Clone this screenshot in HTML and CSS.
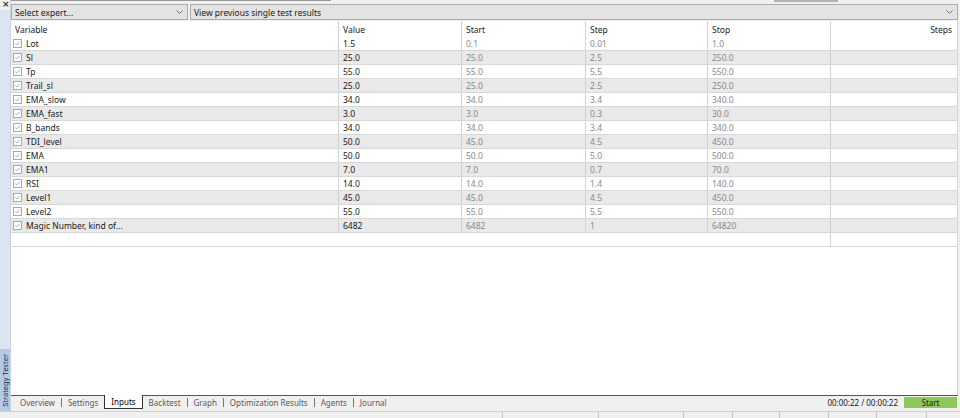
FILE: index.html
```html
<!DOCTYPE html>
<html>
<head>
<meta charset="utf-8">
<link rel="stylesheet" href="styles.css">
</head>
<body>
<div class="app">
  <div class="body">
    <aside class="side">
      <span class="close">×</span>
      <div class="side-fill"></div>
      <div class="side-label"><span>Strategy Tester</span></div>
    </aside>
    <div class="main">
      <div class="topstrip"><span class="thumb-left"></span><span class="thumb"></span></div>
      <div class="selects">
        <div class="select s1"><span>Select expert...</span><svg class="chev" width="7" height="4" viewBox="0 0 7 4"><polyline points="0.5,0.5 3.5,3.5 6.5,0.5" fill="none" stroke="#707070" stroke-width="1"/></svg></div>
        <div class="select s2"><span>View previous single test results</span><svg class="chev" width="7" height="4" viewBox="0 0 7 4"><polyline points="0.5,0.5 3.5,3.5 6.5,0.5" fill="none" stroke="#707070" stroke-width="1"/></svg></div>
      </div>
      <div class="grid">
        <div class="row head">
          <div class="c">Variable</div><div class="c">Value</div><div class="c">Start</div><div class="c">Step</div><div class="c">Stop</div><div class="c r">Steps</div>
        </div>
        <div class="row"><div class="c"><svg class="cb" width="9" height="9" viewBox="0 0 9 9"><rect x="0.5" y="0.5" width="8" height="8" fill="#fff" stroke="#9aaec2"/><polyline points="2.3,4.5 3.7,6 6.7,2.8" fill="none" stroke="#9fb0c2"/></svg>Lot</div><div class="c v">1.5</div><div class="c g">0.1</div><div class="c g">0.01</div><div class="c g">1.0</div><div class="c"></div></div>
        <div class="row alt"><div class="c"><svg class="cb" width="9" height="9" viewBox="0 0 9 9"><rect x="0.5" y="0.5" width="8" height="8" fill="#fff" stroke="#9aaec2"/><polyline points="2.3,4.5 3.7,6 6.7,2.8" fill="none" stroke="#9fb0c2"/></svg>Sl</div><div class="c v">25.0</div><div class="c g">25.0</div><div class="c g">2.5</div><div class="c g">250.0</div><div class="c"></div></div>
        <div class="row"><div class="c"><svg class="cb" width="9" height="9" viewBox="0 0 9 9"><rect x="0.5" y="0.5" width="8" height="8" fill="#fff" stroke="#9aaec2"/><polyline points="2.3,4.5 3.7,6 6.7,2.8" fill="none" stroke="#9fb0c2"/></svg>Tp</div><div class="c v">55.0</div><div class="c g">55.0</div><div class="c g">5.5</div><div class="c g">550.0</div><div class="c"></div></div>
        <div class="row alt"><div class="c"><svg class="cb" width="9" height="9" viewBox="0 0 9 9"><rect x="0.5" y="0.5" width="8" height="8" fill="#fff" stroke="#9aaec2"/><polyline points="2.3,4.5 3.7,6 6.7,2.8" fill="none" stroke="#9fb0c2"/></svg>Trail_sl</div><div class="c v">25.0</div><div class="c g">25.0</div><div class="c g">2.5</div><div class="c g">250.0</div><div class="c"></div></div>
        <div class="row"><div class="c"><svg class="cb" width="9" height="9" viewBox="0 0 9 9"><rect x="0.5" y="0.5" width="8" height="8" fill="#fff" stroke="#9aaec2"/><polyline points="2.3,4.5 3.7,6 6.7,2.8" fill="none" stroke="#9fb0c2"/></svg>EMA_slow</div><div class="c v">34.0</div><div class="c g">34.0</div><div class="c g">3.4</div><div class="c g">340.0</div><div class="c"></div></div>
        <div class="row alt"><div class="c"><svg class="cb" width="9" height="9" viewBox="0 0 9 9"><rect x="0.5" y="0.5" width="8" height="8" fill="#fff" stroke="#9aaec2"/><polyline points="2.3,4.5 3.7,6 6.7,2.8" fill="none" stroke="#9fb0c2"/></svg>EMA_fast</div><div class="c v">3.0</div><div class="c g">3.0</div><div class="c g">0.3</div><div class="c g">30.0</div><div class="c"></div></div>
        <div class="row"><div class="c"><svg class="cb" width="9" height="9" viewBox="0 0 9 9"><rect x="0.5" y="0.5" width="8" height="8" fill="#fff" stroke="#9aaec2"/><polyline points="2.3,4.5 3.7,6 6.7,2.8" fill="none" stroke="#9fb0c2"/></svg>B_bands</div><div class="c v">34.0</div><div class="c g">34.0</div><div class="c g">3.4</div><div class="c g">340.0</div><div class="c"></div></div>
        <div class="row alt"><div class="c"><svg class="cb" width="9" height="9" viewBox="0 0 9 9"><rect x="0.5" y="0.5" width="8" height="8" fill="#fff" stroke="#9aaec2"/><polyline points="2.3,4.5 3.7,6 6.7,2.8" fill="none" stroke="#9fb0c2"/></svg>TDI_level</div><div class="c v">50.0</div><div class="c g">45.0</div><div class="c g">4.5</div><div class="c g">450.0</div><div class="c"></div></div>
        <div class="row"><div class="c"><svg class="cb" width="9" height="9" viewBox="0 0 9 9"><rect x="0.5" y="0.5" width="8" height="8" fill="#fff" stroke="#9aaec2"/><polyline points="2.3,4.5 3.7,6 6.7,2.8" fill="none" stroke="#9fb0c2"/></svg>EMA</div><div class="c v">50.0</div><div class="c g">50.0</div><div class="c g">5.0</div><div class="c g">500.0</div><div class="c"></div></div>
        <div class="row alt"><div class="c"><svg class="cb" width="9" height="9" viewBox="0 0 9 9"><rect x="0.5" y="0.5" width="8" height="8" fill="#fff" stroke="#9aaec2"/><polyline points="2.3,4.5 3.7,6 6.7,2.8" fill="none" stroke="#9fb0c2"/></svg>EMA1</div><div class="c v">7.0</div><div class="c g">7.0</div><div class="c g">0.7</div><div class="c g">70.0</div><div class="c"></div></div>
        <div class="row"><div class="c"><svg class="cb" width="9" height="9" viewBox="0 0 9 9"><rect x="0.5" y="0.5" width="8" height="8" fill="#fff" stroke="#9aaec2"/><polyline points="2.3,4.5 3.7,6 6.7,2.8" fill="none" stroke="#9fb0c2"/></svg>RSI</div><div class="c v">14.0</div><div class="c g">14.0</div><div class="c g">1.4</div><div class="c g">140.0</div><div class="c"></div></div>
        <div class="row alt"><div class="c"><svg class="cb" width="9" height="9" viewBox="0 0 9 9"><rect x="0.5" y="0.5" width="8" height="8" fill="#fff" stroke="#9aaec2"/><polyline points="2.3,4.5 3.7,6 6.7,2.8" fill="none" stroke="#9fb0c2"/></svg>Level1</div><div class="c v">45.0</div><div class="c g">45.0</div><div class="c g">4.5</div><div class="c g">450.0</div><div class="c"></div></div>
        <div class="row"><div class="c"><svg class="cb" width="9" height="9" viewBox="0 0 9 9"><rect x="0.5" y="0.5" width="8" height="8" fill="#fff" stroke="#9aaec2"/><polyline points="2.3,4.5 3.7,6 6.7,2.8" fill="none" stroke="#9fb0c2"/></svg>Level2</div><div class="c v">55.0</div><div class="c g">55.0</div><div class="c g">5.5</div><div class="c g">550.0</div><div class="c"></div></div>
        <div class="row alt"><div class="c"><svg class="cb" width="9" height="9" viewBox="0 0 9 9"><rect x="0.5" y="0.5" width="8" height="8" fill="#fff" stroke="#9aaec2"/><polyline points="2.3,4.5 3.7,6 6.7,2.8" fill="none" stroke="#9fb0c2"/></svg>Magic Number, kind of...</div><div class="c v">6482</div><div class="c g">6482</div><div class="c g">1</div><div class="c g">64820</div><div class="c"></div></div>
        <div class="row blank"><div class="c"></div><div class="c"></div><div class="c"></div><div class="c"></div><div class="c div"></div><div class="c"></div></div>
      </div>
      <div class="tabs">
        <span class="tab">Overview</span><span class="sep"></span><span class="tab">Settings</span><span class="tab active">Inputs</span><span class="tab">Backtest</span><span class="sep"></span><span class="tab">Graph</span><span class="sep"></span><span class="tab">Optimization Results</span><span class="sep"></span><span class="tab">Agents</span><span class="sep"></span><span class="tab">Journal</span>
        <span class="timer">00:00:22 / 00:00:22</span>
        <span class="start">Start</span>
      </div>
    </div>
  </div>
  <div class="status">
    <span class="st w1"></span><span class="st w2"></span><span class="st w3"></span><span class="st w4"></span><span class="st w5"></span><span class="st w6"></span><span class="st w7"></span><span class="st wl"></span>
  </div>
</div>
</body>
</html>
```
FILE: styles.css
```css
* { box-sizing: border-box; }
html, body { margin: 0; padding: 0; }
body {
  width: 960px;
  height: 418px;
  overflow: hidden;
  background: #f0f0f0;
  font-family: "Noto Sans", "Open Sans", sans-serif;
  font-size: 8.5px;
  color: #1a1a1a;
}
.app { display: flex; flex-direction: column; height: 418px; }
.body { display: flex; height: 411px; }

.side {
  width: 11px;
  flex: none;
  display: flex;
  flex-direction: column;
  background: #f0f0f0;
  border-right: 1px solid #c9d3df;
}
.close {
  height: 10px;
  font-size: 9px;
  line-height: 8px;
  padding-left: 2px;
  font-weight: bold;
  color: #333;
  font-family: "DejaVu Sans", sans-serif;
}
.side-fill { flex: 1; background: #dbe5f2; }
.side-label {
  height: 62px;
  background: #b4c9e4;
  display: flex;
  align-items: center;
  justify-content: center;
}
.side-label span {
  writing-mode: vertical-rl;
  transform: rotate(180deg);
  font-size: 7.5px;
  line-height: 10px;
  color: #1e2a3a;
  white-space: nowrap;
}

.main {
  flex: 1;
  min-width: 0;
  display: flex;
  flex-direction: column;
  padding-right: 2px;
}
.topstrip { height: 4px; display: flex; flex: none; }
.thumb-left { width: 320px; height: 1px; background: #9a9a9a; }
.thumb { margin-left: 443px; width: 64px; height: 2px; background: #b2b2b2; }

.selects { display: flex; gap: 2px; height: 16px; flex: none; }
.select {
  display: flex;
  align-items: center;
  justify-content: space-between;
  background: #e3e3e3;
  border: 1px solid #acacac;
  padding: 0 4px 0 3px;
  color: #202020;
}
.s1 { width: 177px; }
.s2 { flex: 1; }
.chev { flex: none; }

.grid {
  flex: 1;
  margin-top: 1px;
  background: #fff;
  border-right: 1px solid #d6d6d6;
}
.row {
  display: grid;
  grid-template-columns: 328px 123px 124px 122px 123px 1fr;
  height: 14px;
  border-bottom: 1px solid #d8d8d8;
}
.row.alt { background: #e9e9e9; }
.row.head { height: 16px; border-bottom: none; }
.c {
  display: flex;
  align-items: center;
  padding-left: 4px;
  border-right: 1px solid #d2d2d2;
  white-space: nowrap;
  overflow: hidden;
}
.c:last-child { border-right: none; }
.row > .c:first-child { padding-left: 2px; }
.head > .c:first-child { padding-left: 4px; }
.c.r { justify-content: flex-end; padding-right: 5px; }
.c.v { color: #1a1a1a; }
.c.g { color: #8a8a8a; }
.cb { flex: none; margin-right: 4px; }
.row.blank .c { border-right: none; }
.row.blank .c.div { border-right: 1px solid #d2d2d2; }

.tabs {
  height: 16px;
  flex: none;
  display: flex;
  align-items: flex-start;
  border-top: 1px solid #555;
  padding-left: 3px;
  color: #5a5a5a;
  font-size: 8px;
}
.tab { padding: 0 6px; line-height: 13px; height: 13px; }
.tab.active {
  background: #fff;
  color: #000;
  border: 1px solid #333;
  border-top: none;
  padding: 0 6px;
  margin: -1px 0 0;
  height: 14px;
  line-height: 14px;
}
.sep { width: 1px; height: 9px; background: #777; margin-top: 2px; }
.timer { margin-left: auto; color: #1a1a1a; line-height: 13px; margin-right: 6px; }
.start {
  width: 53px;
  height: 11px;
  margin-top: 1px;
  margin-right: 1px;
  background: #8cc85a;
  color: #1a1a1a;
  text-align: center;
  line-height: 11px;
}

.status {
  height: 7px;
  flex: none;
  display: flex;
  border-top: 1px solid #cfcfcf;
  padding-left: 502px;
}
.st { border-left: 1px solid #c4c4c4; height: 100%; }
.w1 { width: 96px; }
.w2 { width: 85px; }
.w3 { width: 49px; }
.w4 { width: 47px; }
.w5 { width: 49px; }
.w6 { width: 48px; }
.w7 { width: 50px; }
.wl { flex: 1; }
```
